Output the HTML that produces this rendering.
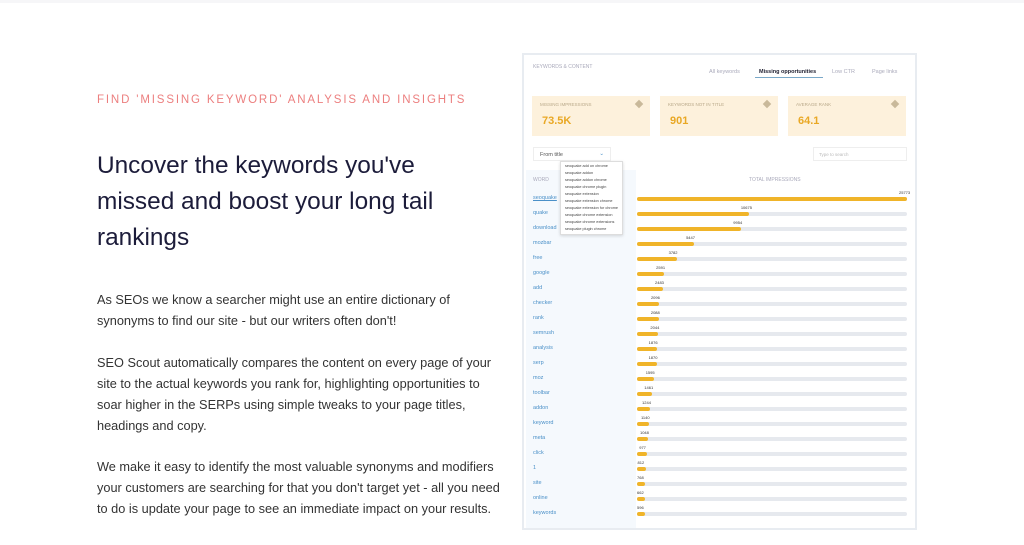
<!DOCTYPE html>
<html><head><meta charset="utf-8"><style>
*{margin:0;padding:0;box-sizing:border-box}
body{width:1024px;height:545px;background:#fff;position:relative;overflow:hidden;font-family:"Liberation Sans",sans-serif}
.a{position:absolute;white-space:nowrap}
.sub{left:97px;top:94px;font-size:11.5px;letter-spacing:1.85px;color:#ec7f7f}
.h{left:97px;font-size:24.4px;color:#1c1c3a}
.p{left:97px;font-size:12.75px;color:#333}
.panel{left:522px;top:53px;width:395px;height:477px;border:2px solid #e8ecf1;background:#fff}
.sm{font-size:5px;color:#aab}
.card{position:absolute;top:41px;height:40px;background:#fdf1dc;width:118px}
.card .t{position:absolute;left:8px;top:6px;font-size:4.5px;color:#b9a98a}
.card .v{position:absolute;left:10px;top:19px;font-size:11px;font-weight:bold;color:#e9a825}
.card .d{position:absolute;right:8px;top:5px;width:6px;height:6px;background:#c9b99a;transform:rotate(45deg)}
.w{position:absolute;left:9px;font-size:5.5px;color:#4a90c8}
.tr{position:absolute;left:113px;width:270px;height:4px;border-radius:2px;background:#e6e9ee}
.b{position:absolute;left:0;top:0;height:4px;border-radius:2px;background:#f0b429}
.n{position:absolute;font-size:4px;color:#333}
</style></head><body>
<div class="a" style="left:0;top:0;width:1024px;height:3px;background:#f6f6f8"></div>
<div class="a sub">FIND 'MISSING KEYWORD' ANALYSIS AND INSIGHTS</div>
<div class="a h" style="top:152px">Uncover the keywords you've</div>
<div class="a h" style="top:188px">missed and boost your long tail</div>
<div class="a h" style="top:224px">rankings</div>
<div class="a p" style="top:292px">As SEOs we know a searcher might use an entire dictionary of</div>
<div class="a p" style="top:313px">synonyms to find our site - but our writers often don't!</div>
<div class="a p" style="top:355px">SEO Scout automatically compares the content on every page of your</div>
<div class="a p" style="top:376px">site to the actual keywords you rank for, highlighting opportunities to</div>
<div class="a p" style="top:397px">soar higher in the SERPs using simple tweaks to your page titles,</div>
<div class="a p" style="top:418px">headings and copy.</div>
<div class="a p" style="top:459px">We make it easy to identify the most valuable synonyms and modifiers</div>
<div class="a p" style="top:480px">your customers are searching for that you don't target yet - all you need</div>
<div class="a p" style="top:501px">to do is update your page to see an immediate impact on your results.</div>

<div class="a panel">
<div class="a sm" style="left:9px;top:9px">KEYWORDS &amp; CONTENT</div>
<div class="a sm" style="left:185px;top:14px;font-size:5.5px">All keywords</div>
<div class="a" style="left:235px;top:14px;font-size:5.5px;font-weight:bold;color:#223">Missing opportunities</div>
<div class="a" style="left:231px;top:22px;width:68px;height:1px;background:#7aa8c8"></div>
<div class="a sm" style="left:308px;top:14px;font-size:5.5px">Low CTR</div>
<div class="a sm" style="left:348px;top:14px;font-size:5.5px">Page links</div>
<div class="card" style="left:8px"><div class="t">MISSING IMPRESSIONS</div><div class="v">73.5K</div><div class="d"></div></div>
<div class="card" style="left:136px"><div class="t">KEYWORDS NOT IN TITLE</div><div class="v">901</div><div class="d"></div></div>
<div class="card" style="left:264px"><div class="t">AVERAGE RANK</div><div class="v">64.1</div><div class="d"></div></div>
<div class="a" style="left:9px;top:92px;width:78px;height:14px;border:1px solid #eee;font-size:5.5px;color:#555;padding:4px 6px">From title<span style="position:absolute;right:6px;top:3px;color:#4a90c8">⌄</span></div>
<div class="a" style="left:289px;top:92px;width:94px;height:14px;border:1px solid #eee;font-size:4.5px;color:#bbb;padding:4px 5px">Type to search</div>
<div class="a" style="left:2px;top:115px;width:110px;height:358px;background:#f5f9fd"></div>
<div class="a sm" style="left:9px;top:122px">WORD</div>
<div class="a sm" style="left:225px;top:122px">TOTAL IMPRESSIONS</div>
<div id="rows"></div>
<div class="a" style="left:36px;top:106px;width:63px;height:74px;background:#fff;border:1px solid #ddd;box-shadow:0 1px 3px rgba(0,0,0,.15);font-size:3.8px;color:#444;line-height:7px;padding:1px 4px;white-space:normal">seoquake add on chrome<br>seoquake addon<br>seoquake addon chrome<br>seoquake chrome plugin<br>seoquake extension<br>seoquake extension chrome<br>seoquake extension for chrome<br>seoquake chrome extension<br>seoquake chrome extensions<br>seoquake plugin chrome</div>
</div>
<script>
var d=[["seoquake",25773],["quake",10675],["download",9954],["mozbar",5447],["free",3782],["google",2591],["add",2483],["checker",2096],["rank",2088],["semrush",2044],["analysis",1876],["serp",1870],["moz",1595],["toolbar",1461],["addon",1244],["keyword",1140],["meta",1048],["click",977],["1",812],["site",768],["online",662],["keywords",596]];
var h="";d.forEach(function(r,i){var y=140+i*15,w=Math.max(8,r[1]/25773*270);
h+='<div class="w" style="top:'+y+'px;'+(i==0?'text-decoration:underline':'')+'">'+r[0]+'</div>';
h+='<div class="tr" style="top:'+(y+2)+'px"><div class="b" style="width:'+w+'px"></div></div>';
h+='<div class="n" style="left:'+(113+w-8)+'px;top:'+(y-5)+'px">'+r[1]+'</div>';});
document.getElementById("rows").innerHTML=h;
</script>
</body></html>
